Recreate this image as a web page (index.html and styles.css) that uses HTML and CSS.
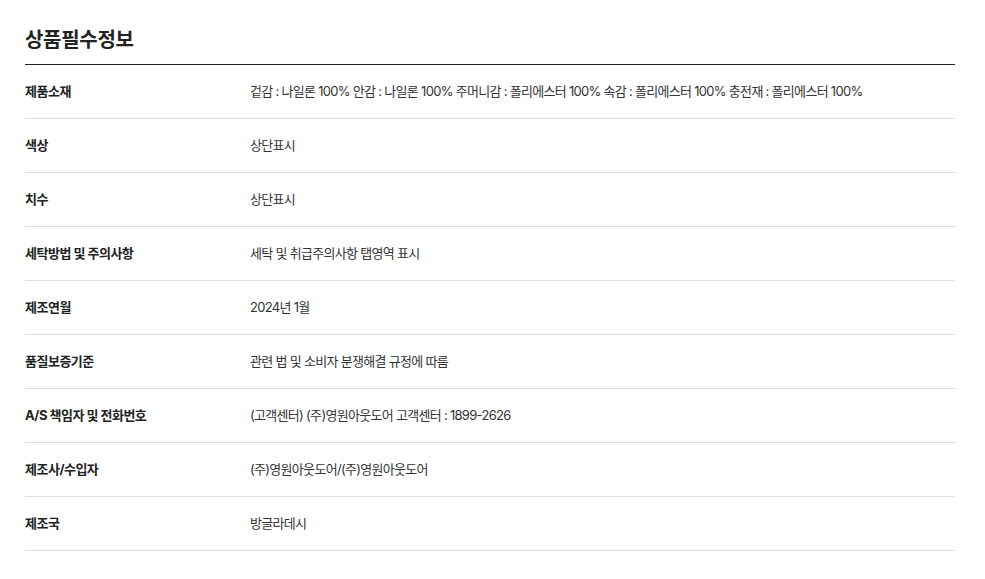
FILE: index.html
```html
<!DOCTYPE html>
<html lang="ko">
<head>
<meta charset="utf-8">
<link rel="stylesheet" href="styles.css">
</head>
<body>
<section class="info">
  <h2 class="info-title">상품필수정보</h2>
  <dl class="info-table">
    <div class="info-row"><dt>제품소재</dt><dd>겉감 : 나일론 100% 안감 : 나일론 100% 주머니감 : 폴리에스터 100% 속감 : 폴리에스터 100% 충전재 : 폴리에스터 100%</dd></div>
    <div class="info-row"><dt>색상</dt><dd>상단표시</dd></div>
    <div class="info-row"><dt>치수</dt><dd>상단표시</dd></div>
    <div class="info-row"><dt>세탁방법 및 주의사항</dt><dd>세탁 및 취급주의사항 탭영역 표시</dd></div>
    <div class="info-row"><dt>제조연월</dt><dd>2024년 1월</dd></div>
    <div class="info-row"><dt>품질보증기준</dt><dd>관련 법 및 소비자 분쟁해결 규정에 따름</dd></div>
    <div class="info-row"><dt>A/S 책임자 및 전화번호</dt><dd>(고객센터) (주)영원아웃도어 고객센터 : 1899-2626</dd></div>
    <div class="info-row"><dt>제조사/수입자</dt><dd>(주)영원아웃도어/(주)영원아웃도어</dd></div>
    <div class="info-row"><dt>제조국</dt><dd>방글라데시</dd></div>
  </dl>
</section>
</body>
</html>
```
FILE: styles.css
```css
html, body {
  margin: 0;
  padding: 0;
  background: #fff;
}
body {
  font-family: Inter, "Noto Sans CJK KR", sans-serif;
  color: #222;
}
.info {
  width: 930px;
  margin: 0 0 0 25px;
  padding-top: 28px;
}
.info-title {
  margin: 0;
  font-size: 20px;
  line-height: 24px;
  font-weight: 700;
  letter-spacing: -0.3px;
  color: #222;
  padding-bottom: 12px;
  border-bottom: 1px solid #222;
}
.info-table {
  margin: 0;
}
.info-row {
  display: flex;
  align-items: center;
  box-sizing: border-box;
  height: 54px;
  padding-bottom: 2px;
  border-bottom: 1px solid #ddd;
  font-size: 13px;
  letter-spacing: -0.5px;
}
.info-row dt {
  width: 225px;
  flex: none;
  font-weight: 700;
  color: #222;
}
.info-row dd {
  margin: 0;
  color: #333;
  letter-spacing: -0.7px;
}
```
